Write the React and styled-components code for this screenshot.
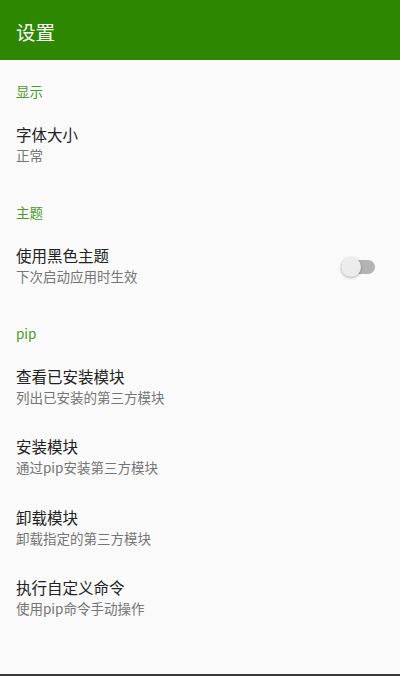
import React, { useState } from "react";
import styled, { createGlobalStyle } from "styled-components";

const GlobalStyle = createGlobalStyle`
  html, body {
    margin: 0;
    padding: 0;
    background: #fafafa;
  }
  body {
    font-family: "Noto Sans CJK SC", "Noto Sans", Roboto, sans-serif;
  }
`;

const Page = styled.div`
  height: 676px;
  box-sizing: border-box;
  background: #fafafa;
  border-bottom: 2px solid #3a3a3a;
  display: flex;
  flex-direction: column;
  overflow: hidden;
`;

const Toolbar = styled.header`
  height: 60px;
  flex-shrink: 0;
  box-sizing: border-box;
  padding: 3px 16px 0;
  background: #2e8700;
  display: flex;
  align-items: center;
`;

const ToolbarTitle = styled.h1`
  margin: 0;
  font-size: 19.5px;
  font-weight: 400;
  line-height: 24px;
  color: #ffffff;
`;

const Category = styled.div`
  padding: 21px 16px 9.5px;
  font-size: 13.5px;
  line-height: 20px;
  font-weight: 400;
  color: #4b9a2a;
`;

const Item = styled.div`
  height: 70.5px;
  box-sizing: border-box;
  padding: 12px 25px 16px 16px;
  display: flex;
  align-items: center;
  cursor: pointer;
`;

const ItemText = styled.div`
  flex: 1;
  display: flex;
  flex-direction: column;
`;

const ItemTitle = styled.span`
  font-size: 15.5px;
  line-height: 22px;
  color: #212121;
`;

const ItemSummary = styled.span`
  font-size: 13.5px;
  line-height: 20.5px;
  color: #757575;
`;

const Track = styled.div`
  position: relative;
  top: 2px;
  width: 34px;
  height: 14px;
  border-radius: 7px;
  background: ${(p) => (p.on ? "#8fc47a" : "#b4b4b4")};
`;

const Thumb = styled.div`
  position: absolute;
  top: -3px;
  left: ${(p) => (p.on ? "14px" : "0")};
  width: 20px;
  height: 20px;
  border-radius: 50%;
  background: ${(p) => (p.on ? "#2e8700" : "#ececec")};
  box-shadow: 0 1px 3px rgba(0, 0, 0, 0.3);
`;

const Switch = ({ on, onToggle }) => (
  <Track on={on} onClick={onToggle}>
    <Thumb on={on} />
  </Track>
);

const sections = [
  {
    title: "显示",
    items: [{ title: "字体大小", summary: "正常" }],
  },
  {
    title: "主题",
    items: [{ title: "使用黑色主题", summary: "下次启动应用时生效", toggle: true }],
  },
  {
    title: "pip",
    items: [
      { title: "查看已安装模块", summary: "列出已安装的第三方模块" },
      { title: "安装模块", summary: "通过pip安装第三方模块" },
      { title: "卸载模块", summary: "卸载指定的第三方模块" },
      { title: "执行自定义命令", summary: "使用pip命令手动操作" },
    ],
  },
];

export default function App() {
  const [dark, setDark] = useState(false);

  return (
    <>
      <GlobalStyle />
      <Page>
        <Toolbar>
          <ToolbarTitle>设置</ToolbarTitle>
        </Toolbar>
        {sections.map((s) => (
          <React.Fragment key={s.title}>
            <Category>{s.title}</Category>
            {s.items.map((it) => (
              <Item key={it.title}>
                <ItemText>
                  <ItemTitle>{it.title}</ItemTitle>
                  <ItemSummary>{it.summary}</ItemSummary>
                </ItemText>
                {it.toggle && <Switch on={dark} onToggle={() => setDark(!dark)} />}
              </Item>
            ))}
          </React.Fragment>
        ))}
      </Page>
    </>
  );
}
